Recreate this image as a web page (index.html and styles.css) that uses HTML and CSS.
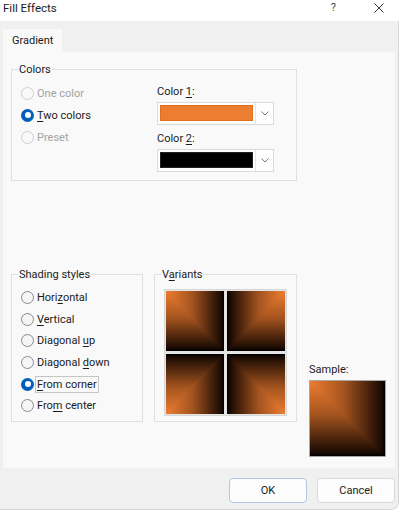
FILE: index.html
```html
<!DOCTYPE html>
<html lang="en">
<head>
  <meta charset="UTF-8">
  <title>Fill Effects</title>
  <link rel="stylesheet" href="styles.css">
</head>
<body>
  <div class="window">
    <!-- Title bar -->
    <div class="titlebar">
      <div class="title">Fill Effects</div>
      <div class="help">?</div>
      <svg class="close" width="10" height="10" viewBox="0 0 10 10">
        <path d="M0.5 0.5 L9.5 9.5 M9.5 0.5 L0.5 9.5" stroke="#333" stroke-width="1" fill="none"/>
      </svg>
    </div>

    <div class="tabs">
      <div class="tab">Gradient</div>
    </div>

    <div class="panel">
      <!-- Colors -->
      <div class="group colors">
        <div class="group-title">Colors</div>
        <div class="radio-list">
          <div class="radio-row disabled"><span class="radio"></span>One color</div>
          <div class="radio-row"><span class="radio checked"></span><span><u>T</u>wo colors</span></div>
          <div class="radio-row disabled"><span class="radio"></span>Preset</div>
        </div>
        <div class="color-col">
          <div class="field-label">Color <u>1</u>:</div>
          <div class="combo">
            <div class="swatch orange"></div>
            <div class="combo-btn">
              <svg width="8" height="5" viewBox="0 0 8 5"><path d="M0.5 0.5 L4 4 L7.5 0.5" stroke="#777" fill="none"/></svg>
            </div>
          </div>
          <div class="field-label">Color <u>2</u>:</div>
          <div class="combo">
            <div class="swatch black"></div>
            <div class="combo-btn">
              <svg width="8" height="5" viewBox="0 0 8 5"><path d="M0.5 0.5 L4 4 L7.5 0.5" stroke="#777" fill="none"/></svg>
            </div>
          </div>
        </div>
      </div>

      <div class="lower">
        <!-- Shading styles -->
        <div class="group shading">
          <div class="group-title">Shading styles</div>
          <div class="radio-row"><span class="radio"></span><span>Hori<u>z</u>ontal</span></div>
          <div class="radio-row"><span class="radio"></span><span><u>V</u>ertical</span></div>
          <div class="radio-row"><span class="radio"></span><span>Diagonal <u>u</u>p</span></div>
          <div class="radio-row"><span class="radio"></span><span>Diagonal <u>d</u>own</span></div>
          <div class="radio-row"><span class="radio checked"></span><span class="focused"><u>F</u>rom corner</span></div>
          <div class="radio-row"><span class="radio"></span><span>Fro<u>m</u> center</span></div>
        </div>

        <!-- Variants -->
        <div class="group variants">
          <div class="group-title">V<u>a</u>riants</div>
          <div class="variants-grid">
            <div class="tile"></div>
            <div class="tile tr"></div>
            <div class="tile bl"></div>
            <div class="tile br"></div>
          </div>
        </div>

        <!-- Sample -->
        <div class="sample">
          <div class="field-label">Sample:</div>
          <div class="tile sample-box"></div>
        </div>
      </div>
    </div>

    <div class="footer">
      <button class="btn default">OK</button>
      <button class="btn">Cancel</button>
    </div>
  </div>
</body>
</html>
```

FILE: styles.css
```css
html, body {
  margin: 0;
  padding: 0;
  background: #fff;
  font-family: Roboto, "Noto Sans", sans-serif;
  font-size: 11px;
  color: #1b1b1b;
}

.window {
  width: 399px;
  height: 510px;
  box-sizing: border-box;
  background: #f0f0f0;
  border-right: 1px solid #d6d6d6;
  border-bottom: 1px solid #d6d6d6;
  border-bottom-right-radius: 8px;
}

/* Title bar */
.titlebar {
  height: 21px;
  background: #fff;
  display: flex;
  align-items: flex-start;
  padding-left: 3px;
  margin-right: -1px;
}

.title {
  flex: 1;
  font-size: 11.5px;
  line-height: 16px;
}

.help {
  line-height: 16px;
  color: #444;
  margin-right: 38px;
}

.close {
  margin-top: 3px;
  margin-right: 15px;
}

/* Tabs */
.tabs {
  padding: 8px 0 0 3px;
  display: flex;
}

.tab {
  width: 59px;
  height: 23px;
  line-height: 24px;
  box-sizing: border-box;
  padding-left: 9px;
  background: #f9f9f9;
}

.panel {
  margin-left: 3px;
  width: 392px;
  height: 416px;
  box-sizing: border-box;
  background: #f9f9f9;
  padding: 17px 0 0 8px;
}

/* Group boxes */
.group {
  position: relative;
  border: 1px solid #e0e0e0;
  box-sizing: border-box;
}

.group-title {
  position: absolute;
  top: -8px;
  left: 6px;
  padding: 0 1px;
  line-height: 16px;
  background: #f9f9f9;
}

u {
  text-decoration-thickness: 1px;
  text-underline-offset: 2px;
}

/* Radios */
.radio-row {
  display: flex;
  align-items: center;
  gap: 3px;
  height: 22px;
}

.radio {
  width: 13px;
  height: 13px;
  box-sizing: border-box;
  border: 1px solid #8a8a8a;
  border-radius: 50%;
  background: #f5f5f5;
  position: relative;
}

.radio.checked {
  border: none;
  background: #005fb8;
}

.radio.checked::after {
  content: '';
  position: absolute;
  top: 3.5px;
  left: 3.5px;
  width: 6px;
  height: 6px;
  border-radius: 50%;
  background: #fff;
}

.radio-row.disabled {
  color: #a3a3a3;
}

.radio-row.disabled .radio {
  border-color: #cdcdcd;
  background: #f9f9f9;
}

.focused {
  outline: 1px solid #c6c6c6;
  outline-offset: 1px;
}

/* Colors */
.colors {
  width: 286px;
  height: 112px;
  display: grid;
  grid-template-columns: 136px 117px;
  align-items: start;
  padding: 12px 0 0 9px;
}

.color-col {
  margin-top: 2px;
}

.field-label {
  line-height: 16px;
}

.combo + .field-label {
  margin-top: 6px;
}

.field-label + .combo {
  margin-top: 2px;
}

.combo {
  display: flex;
  width: 117px;
  height: 23px;
  box-sizing: border-box;
  border: 1px solid #dadada;
  background: #fff;
}

.swatch {
  width: 93px;
  height: 16px;
  margin: 2px 2px 3px 2px;
  box-sizing: border-box;
  border: 1px solid;
}

.swatch.orange {
  background: #ed7d31;
  border-color: #e0701f;
}

.swatch.black {
  background: #000;
  border-color: #222;
}

.combo-btn {
  width: 18px;
  box-sizing: border-box;
  border-left: 1px solid #e6e6e6;
  display: flex;
  align-items: center;
  justify-content: center;
}

/* Lower row */
.lower {
  display: flex;
  align-items: flex-start;
  margin-top: 93px;
}

.shading {
  width: 132px;
  height: 148px;
  padding: 12px 0 0 9px;
}

.shading .radio-row {
  height: 21.6px;
}

.variants {
  width: 143px;
  height: 148px;
  margin-left: 11px;
  padding: 14px 0 0 9px;
}

.variants-grid {
  display: grid;
  grid-template-columns: 58px 58px;
  grid-auto-rows: 60px;
  gap: 3px;
  padding: 1px;
  width: max-content;
  border: 1px solid #d8d8d8;
  background: #e4e4e4;
}

/* "From corner" gradient: vertical ramp, horizontal ramp clipped to upper-right triangle */
.tile {
  position: relative;
  background: linear-gradient(to bottom, #ed7d31, #a4541f 45%, #1a0a02 95%, #000);
}

.tile::after {
  content: '';
  position: absolute;
  top: 0;
  left: 0;
  right: 0;
  bottom: 0;
  background: linear-gradient(to right, #ed7d31, #a4541f 45%, #1a0a02 95%, #000);
  clip-path: polygon(0 0, 100% 0, 100% 100%);
}

.tile.tr { transform: scaleX(-1); }
.tile.bl { transform: scaleY(-1); }
.tile.br { transform: scale(-1, -1); }

.sample {
  margin-left: 12px;
  margin-top: 88px;
}

.sample-box {
  width: 77px;
  height: 77px;
  margin-top: 2px;
  box-sizing: border-box;
  border: 1px solid #a8a8a8;
}

/* Footer */
.footer {
  display: flex;
  justify-content: flex-end;
  gap: 10px;
  padding: 10px 3px 0 0;
}

.btn {
  width: 78px;
  height: 25px;
  border: 1px solid #d9d9d9;
  border-radius: 4px;
  background: #fdfdfd;
  font-family: Roboto, "Noto Sans", sans-serif;
  font-size: 11px;
  color: #1b1b1b;
  padding: 0;
}

.btn.default {
  border-color: #b3c6e6;
}
```
